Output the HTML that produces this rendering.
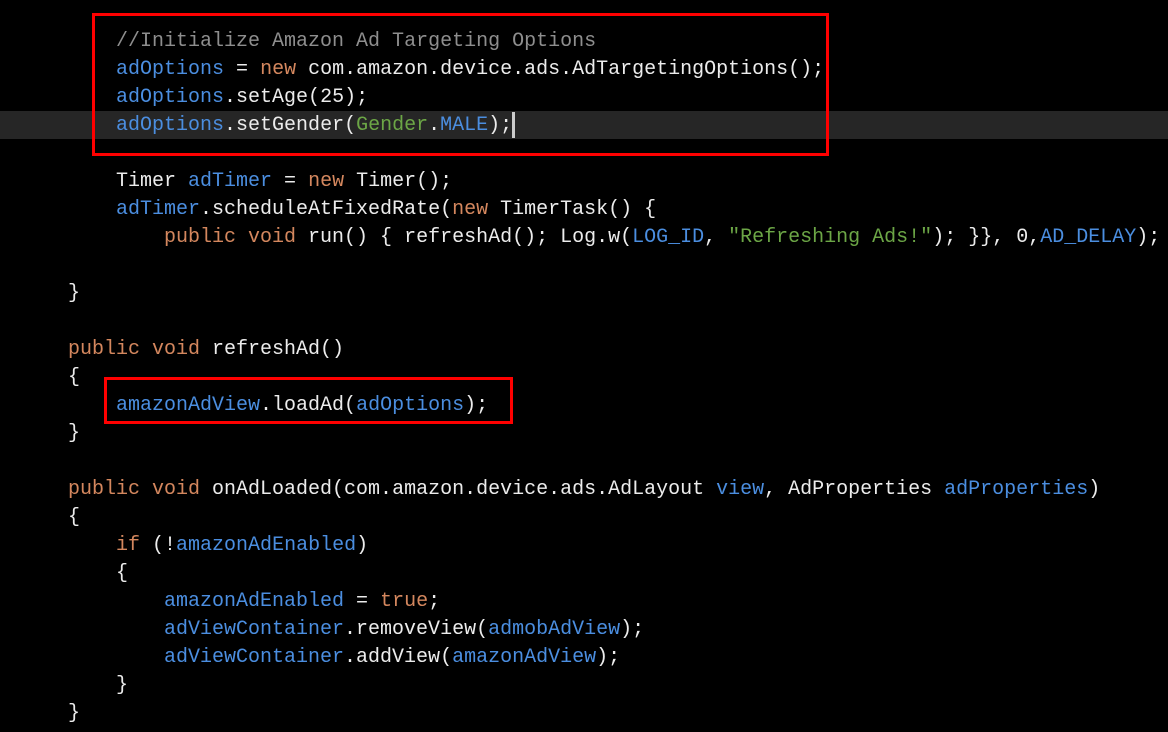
<!DOCTYPE html>
<html><head><meta charset="utf-8"><style>
html,body{margin:0;padding:0;background:#000;width:1168px;height:732px;overflow:hidden}
pre{margin:0;position:absolute;left:68px;top:28px;font-family:"Liberation Mono",monospace;font-size:20px;line-height:28px;color:#ececec;white-space:pre}
.b{color:#4b8ee0}.k{color:#d4875e}.g{color:#6ca646}.c{color:#8e8e8e}
.hl{position:absolute;left:0;top:111px;width:1168px;height:28px;background:#262626}
.box{position:absolute;border:3px solid #f00}
.cur{position:absolute;left:512px;top:112px;width:3px;height:26px;background:#ccc}
</style></head><body>
<div class="hl"></div>
<pre>    <span class="c">//Initialize Amazon Ad Targeting Options</span>
    <span class="b">adOptions</span> = <span class="k">new</span> com.amazon.device.ads.AdTargetingOptions();
    <span class="b">adOptions</span>.setAge(25);
    <span class="b">adOptions</span>.setGender(<span class="g">Gender</span>.<span class="b">MALE</span>);

    Timer <span class="b">adTimer</span> = <span class="k">new</span> Timer();
    <span class="b">adTimer</span>.scheduleAtFixedRate(<span class="k">new</span> TimerTask() {
        <span class="k">public void</span> run() { refreshAd(); Log.w(<span class="b">LOG_ID</span>, <span class="g">"Refreshing Ads!"</span>); }}, 0,<span class="b">AD_DELAY</span>);

}

<span class="k">public void</span> refreshAd()
{
    <span class="b">amazonAdView</span>.loadAd(<span class="b">adOptions</span>);
}

<span class="k">public void</span> onAdLoaded(com.amazon.device.ads.AdLayout <span class="b">view</span>, AdProperties <span class="b">adProperties</span>)
{
    <span class="k">if</span> (!<span class="b">amazonAdEnabled</span>)
    {
        <span class="b">amazonAdEnabled</span> = <span class="k">true</span>;
        <span class="b">adViewContainer</span>.removeView(<span class="b">admobAdView</span>);
        <span class="b">adViewContainer</span>.addView(<span class="b">amazonAdView</span>);
    }
}</pre>
<div class="cur"></div>
<div class="box" style="left:92px;top:13px;width:731px;height:137px"></div>
<div class="box" style="left:104px;top:377px;width:403px;height:41px"></div>
</body></html>
